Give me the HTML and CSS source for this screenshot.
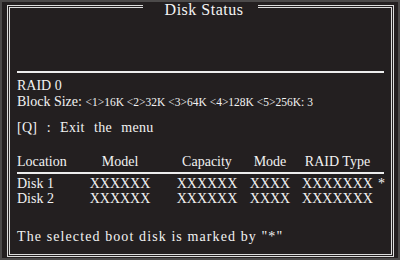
FILE: index.html
```html
<!DOCTYPE html>
<html>
<head>
<meta charset="utf-8">
<link rel="stylesheet" href="styles.css">
</head>
<body>
<div class="screen">
  <fieldset class="frame">
    <legend class="title">Disk Status</legend>
    <div class="panel">
      <div class="rule"></div>
      <div class="info">
        <div class="line">RAID 0</div>
        <div class="line">Block Size: <span class="small">&lt;1&gt;16K &lt;2&gt;32K &lt;3&gt;64K &lt;4&gt;128K &lt;5&gt;256K: 3</span></div>
      </div>
      <div class="hint">[Q] : Exit the menu</div>
      <div class="table">
        <div class="row head">
          <span class="c1">Location</span>
          <span class="cc">Model</span>
          <span class="cc">Capacity</span>
          <span class="cc">Mode</span>
          <span class="cc">RAID Type</span>
        </div>
        <div class="sep"></div>
        <div class="rows">
          <div class="row">
            <span class="c1">Disk 1</span>
            <span class="cc">XXXXXX</span>
            <span class="cc">XXXXXX</span>
            <span class="cc">XXXX</span>
            <span class="cc boot">XXXXXXX<span class="star">*</span></span>
          </div>
          <div class="row">
            <span class="c1">Disk 2</span>
            <span class="cc">XXXXXX</span>
            <span class="cc">XXXXXX</span>
            <span class="cc">XXXX</span>
            <span class="cc">XXXXXXX</span>
          </div>
        </div>
      </div>
      <div class="note">The selected boot disk is marked by "*"</div>
    </div>
  </fieldset>
</div>
</body>
</html>
```
FILE: styles.css
```css
html, body {
  margin: 0;
  padding: 0;
  background: #231f20;
}
.screen {
  width: 400px;
  height: 260px;
  box-sizing: border-box;
  border: 2px solid #4c4a4a;
  background: #231f20;
  display: flex;
  flex-direction: column;
  font-family: "Liberation Serif", "Times New Roman", serif;
  color: #f2f2f2;
  font-size: 14px;
}
.frame {
  flex: 1;
  margin: 0 4px 1px 5px;
  padding: 0 7px;
  border: 3px double #dcdcdc;
  min-inline-size: 0;
  min-width: 0;
}
.title {
  margin: 0 auto;
  padding: 6px 15px 0 22px;
  font-size: 16px;
  line-height: 3px;
  letter-spacing: 0.5px;
  color: #f4f4f4;
}
.panel {
  display: flex;
  flex-direction: column;
}
.rule {
  margin-top: 60px;
  height: 2px;
  background: #ededed;
}
.info {
  margin-top: 5px;
  line-height: 16px;
}
.small {
  font-size: 11.5px;
}
.hint {
  margin-top: 10px;
  line-height: 16px;
  letter-spacing: 0.3px;
  word-spacing: 5.5px;
}
.table {
  margin-top: 18px;
  display: flex;
  flex-direction: column;
}
.rows {
  margin-top: 2px;
  display: flex;
  flex-direction: column;
}
.row {
  display: grid;
  grid-template-columns: 54px 98px 76px 50px 85px 1fr;
  line-height: 15px;
}
.row.head {
  line-height: 16px;
}
.c1 {
  justify-self: start;
}
.cc {
  justify-self: center;
}
.boot {
  position: relative;
}
.star {
  position: absolute;
  left: 100%;
  top: 0;
  margin-left: 5px;
}
.sep {
  margin-top: 2px;
  height: 2px;
  background: #ededed;
}
.note {
  margin-top: 23px;
  line-height: 16px;
  letter-spacing: 1.1px;
}
```
